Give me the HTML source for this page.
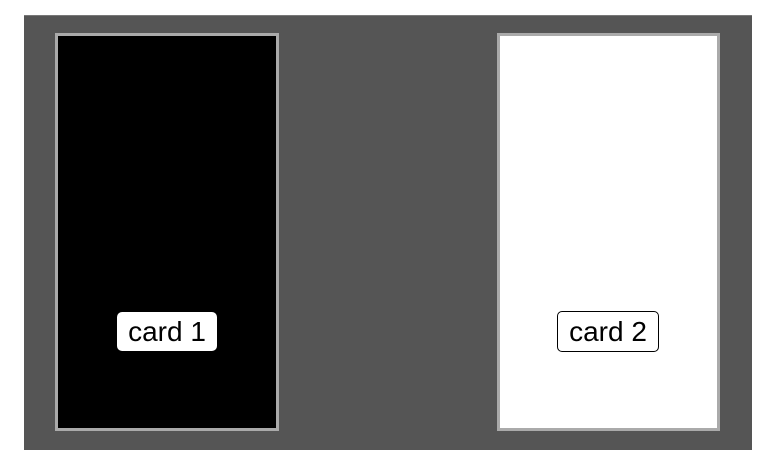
<!DOCTYPE html>
<html><head><style>
html,body{margin:0;padding:0;background:#fff;width:768px;height:474px;overflow:hidden;font-family:"Liberation Sans",sans-serif}
.bg{position:absolute;left:24px;top:15px;width:728px;height:435px;background:#555;border-top:1px solid #777;box-sizing:border-box}
.card{position:absolute;top:33px;height:398px;box-sizing:border-box;border:3px solid #aaa}
.c1{left:55px;width:224px;background:#000}
.c2{left:497px;width:223px;background:#fff}
.lab{position:absolute;height:39px;line-height:39px;font-size:28px;color:#000;background:#fff;border-radius:5px;text-align:center;box-sizing:border-box}
.l1{left:117px;top:312px;width:100px}
.l2{left:557px;top:311px;width:102px;height:41px;line-height:39px;border:1px solid #000}
</style></head><body>
<div class="bg"></div>
<div class="card c1"></div>
<div class="card c2"></div>
<div class="lab l1">card 1</div>
<div class="lab l2">card 2</div>
</body></html>
